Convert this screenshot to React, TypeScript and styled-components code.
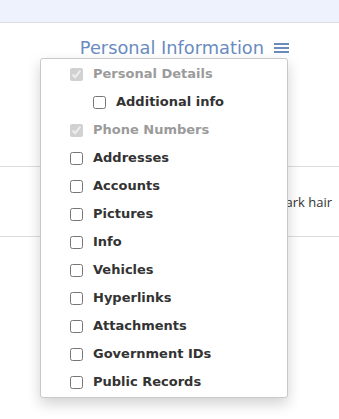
import React, { useState } from "react";
import styled, { createGlobalStyle } from "styled-components";

interface Section {
  id: string;
  label: string;
  locked?: boolean;
  nested?: boolean;
}

const sections: Section[] = [
  { id: "personal", label: "Personal Details", locked: true },
  { id: "additional", label: "Additional info", nested: true },
  { id: "phones", label: "Phone Numbers", locked: true },
  { id: "addresses", label: "Addresses" },
  { id: "accounts", label: "Accounts" },
  { id: "pictures", label: "Pictures" },
  { id: "info", label: "Info" },
  { id: "vehicles", label: "Vehicles" },
  { id: "hyperlinks", label: "Hyperlinks" },
  { id: "attachments", label: "Attachments" },
  { id: "govids", label: "Government IDs" },
  { id: "records", label: "Public Records" },
];

const App: React.FC = () => {
  const [checked, setChecked] = useState<Record<string, boolean>>({});

  const toggle = (id: string) => {
    setChecked({ ...checked, [id]: !checked[id] });
  };

  return (
    <Page>
      <GlobalStyle />
      <TopBand />
      <Header>
        <TitleWrapper>
          <Title>Personal Information</Title>
          <MenuIcon aria-label="menu">
            <span />
            <span />
            <span />
          </MenuIcon>
          <Dropdown>
            {sections.map((item) => (
              <Option key={item.id} $nested={item.nested} $locked={item.locked}>
                <input
                  type="checkbox"
                  disabled={item.locked}
                  checked={item.locked ? true : !!checked[item.id]}
                  onChange={() => toggle(item.id)}
                />
                {item.label}
              </Option>
            ))}
          </Dropdown>
        </TitleWrapper>
      </Header>
      <Table>
        <Row>
          <Cell>Dark hair</Cell>
        </Row>
      </Table>
    </Page>
  );
};

export default App;

const GlobalStyle = createGlobalStyle`
  body {
    margin: 0;
    background: #ffffff;
    font-family: "DejaVu Sans", "Liberation Sans", sans-serif;
  }
`;

const Page = styled.div`
  width: 339px;
  height: 419px;
  overflow: hidden;
  background: #ffffff;
`;

const TopBand = styled.div`
  height: 22px;
  background-color: #eef2fd;
  border-bottom: 1px solid #dcdde3;
`;

const Header = styled.div`
  display: flex;
  justify-content: flex-end;
  padding-right: 50px;
  margin-top: 12px;
`;

const TitleWrapper = styled.div`
  position: relative;
  display: flex;
  align-items: center;
  gap: 10px;
  height: 24px;
`;

const Title = styled.span`
  font-size: 17.8px;
  font-weight: 400;
  color: #6a8bbf;
`;

const MenuIcon = styled.div`
  display: flex;
  flex-direction: column;
  gap: 2px;
  width: 15px;
  margin-top: 2px;

  > span {
    display: block;
    height: 2px;
    background-color: #6a8bbf;
  }
`;

const Dropdown = styled.div`
  position: absolute;
  top: 23px;
  right: 1px;
  width: 246px;
  padding: 0 0 2px;
  background: #ffffff;
  border: 1px solid #c9c9c9;
  border-radius: 3px;
  box-shadow: 0 6px 14px rgba(0, 0, 0, 0.18);
  z-index: 2;
`;

const Option = styled.label<{ $nested?: boolean; $locked?: boolean }>`
  display: flex;
  align-items: center;
  gap: 10px;
  height: 28px;
  padding-left: ${(p) => (p.$nested ? 52 : 29)}px;
  font-size: 13px;
  font-weight: 700;
  color: ${(p) => (p.$locked ? "#9b9b9b" : "#333333")};
  cursor: pointer;

  > input {
    width: 13px;
    height: 13px;
    margin: 3px 0 0;
  }
`;

const Table = styled.div`
  margin-top: 107px;
  border-top: 1px solid #dcdcdc;
  border-bottom: 1px solid #dcdcdc;
`;

const Row = styled.div`
  display: flex;
  justify-content: flex-end;
  align-items: center;
  height: 69px;
  padding-right: 7px;
`;

const Cell = styled.span`
  font-family: "Open Sans", "Liberation Sans", sans-serif;
  font-size: 13px;
  color: #333333;
`;
